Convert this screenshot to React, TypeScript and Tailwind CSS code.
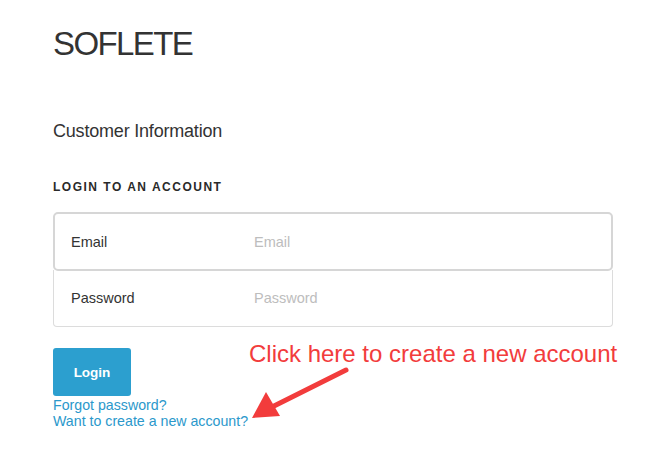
export default function App() {
  return (
    <div
      className="relative min-h-[453px] w-[650px] bg-white pl-[53px] pt-[26px] text-[#333]"
      style={{ fontFamily: '"Liberation Sans", Arial, sans-serif' }}
    >
      <h1 className="text-[33px] leading-[36px] tracking-[-1.6px]">SOFLETE</h1>

      <h2 className="mt-[58px] text-[18px] leading-[22px] tracking-[-0.2px]">Customer Information</h2>

      <h3 className="mt-[38px] text-[12px] font-bold leading-[14px] tracking-[1.5px] text-[#2a2a2a]">
        LOGIN TO AN ACCOUNT
      </h3>

      {/* Login form */}
      <div className="mt-[18px] w-[560px] text-[14.5px]">
        <div className="flex h-[59px] items-center rounded-[5px] border-2 border-[#d6d6d6] pl-[16px] pt-[2px]">
          <span className="w-[183px] text-[#333]">Email</span>
          <span className="text-[#bdbdbd]">Email</span>
        </div>
        <div className="-mt-[1px] flex h-[57px] items-center rounded-b-[4px] border border-t-0 border-[#dcdcdc] pl-[17px] pt-[2px]">
          <span className="w-[183px] text-[#333]">Password</span>
          <span className="text-[#bdbdbd]">Password</span>
        </div>
      </div>

      <button className="mt-[21px] flex h-[48px] w-[78px] items-center justify-center rounded-[3px] bg-[#2c9fcf] pt-[2px] text-[13.5px] font-bold text-white">
        Login
      </button>

      <div className="mt-[1px] flex flex-col text-[14.2px] leading-[16px] text-[#2b98cb]">
        <a>Forgot password?</a>
        <a>Want to create a new account?</a>
      </div>

      {/* Annotation */}
      <div className="absolute left-[249px] top-[340px] text-[24px] leading-[28px] text-[#f23c3c]">
        Click here to create a new account
      </div>
      <svg className="absolute left-[248px] top-[364px]" width="104" height="60" viewBox="0 0 104 60">
        <line x1="98" y1="6" x2="26" y2="42" stroke="#f23c3c" strokeWidth="5" strokeLinecap="round" />
        <polygon points="4,54 18,28 32,52" fill="#f23c3c" />
      </svg>
    </div>
  );
}
